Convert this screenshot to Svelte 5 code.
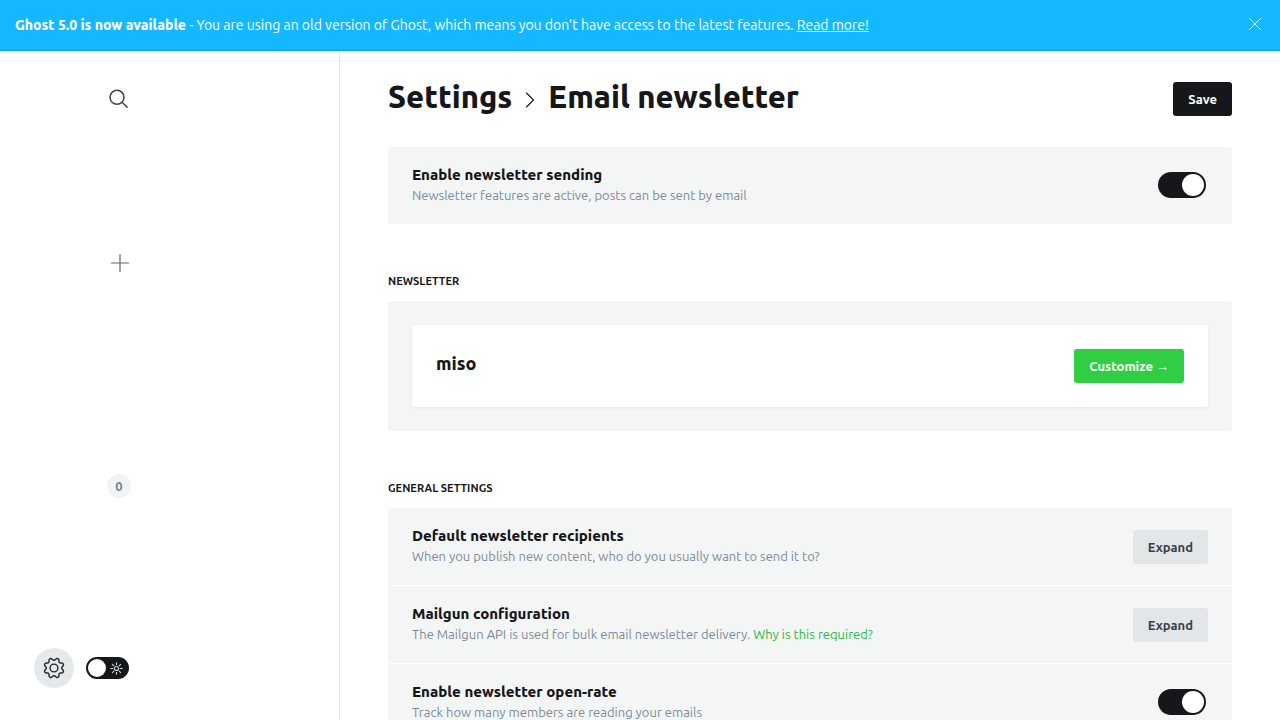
<script>
  let bannerOpen = $state(true);
  let night = $state(false);
  let sending = $state(true);
  let openRate = $state(true);

  // Eight-toothed gear outline, centred in a 22x22 box.
  const gearPath =
    'M' +
    Array.from({ length: 96 }, (_, i) => {
      const t = (i / 96) * 2 * Math.PI;
      const wave = -Math.cos(8 * t);
      const r = 8.9 + 1.2 * Math.sign(wave) * Math.pow(Math.abs(wave), 0.7);
      return `${(11 + r * Math.cos(t)).toFixed(2)} ${(11 + r * Math.sin(t)).toFixed(2)}`;
    }).join('L') +
    'Z';
</script>

<div class="app">
  {#if bannerOpen}
    <aside class="banner">
      <p><b>Ghost 5.0 is now available</b> - You are using an old version of Ghost, which means you don't have access to the latest features. <a href="#update">Read more!</a></p>
      <button class="close" aria-label="Close" onclick={() => (bannerOpen = false)}>
        <svg width="12" height="12" viewBox="0 0 12 12"><path d="M0 0l12 12M12 0L0 12" fill="none" stroke="#fff" stroke-width=".8" /></svg>
      </button>
    </aside>
  {/if}

  <div class="body">
    <nav class="sidebar">
      <button class="icon search" aria-label="Search">
        <svg width="20" height="20" viewBox="0 0 20 20" fill="none" stroke="#394047" stroke-width="1.5" stroke-linecap="round"><circle cx="8" cy="8.3" r="7" /><path d="M13.1 13.3l5 4.9" /></svg>
      </button>
      <a class="icon add" href="#new-post" aria-label="New post">
        <svg width="20" height="20" viewBox="0 0 20 20" fill="none" stroke="#5d666f" stroke-width="1.2" stroke-linecap="round"><path d="M10 1.5v17M1.5 10h17" /></svg>
      </a>
      <a class="count" href="#members">0</a>
      <div class="tools">
        <a class="gear" href="#settings" aria-label="Settings">
          <svg width="22" height="22" viewBox="0 0 22 22" fill="none" stroke="#23272c" stroke-width="1.4" stroke-linejoin="round">
            <circle cx="11" cy="11" r="3.9" />
            <path d={gearPath} />
          </svg>
        </a>
        <label class="night">
          <input type="checkbox" aria-label="Night shift" bind:checked={night} />
          <svg width="13" height="13" viewBox="0 0 14 14" fill="none" stroke="#ced4d9" stroke-width="1.2" stroke-linecap="round"><circle cx="7" cy="7" r="2.2" /><path d="M7 .8v2.2M7 11v2.2M.8 7H3M11 7h2.2M2.6 2.6l1.5 1.5M9.9 9.9l1.5 1.5M2.6 11.4l1.5-1.5M9.9 4.1l1.5-1.5" /></svg>
        </label>
      </div>
    </nav>

    <main>
      <header>
        <h1>
          <a href="#settings">Settings</a>
          <svg width="10" height="18" viewBox="0 0 10 18" fill="none" stroke="#15171a" stroke-width="1.1" stroke-linecap="round" stroke-linejoin="round"><path d="M1.5 2L8.5 9l-7 7" /></svg>
          <span>Email newsletter</span>
        </h1>
        <button class="btn dark">Save</button>
      </header>

      <section class="panel">
        <div class="row">
          <div>
            <h4>Enable newsletter sending</h4>
            <p>Newsletter features are active, posts can be sent by email</p>
          </div>
          <input class="switch" type="checkbox" aria-label="Enable newsletter sending" bind:checked={sending} />
        </div>
      </section>

      <h2>Newsletter</h2>
      <section class="panel inset">
        <div class="card">
          <h3>miso</h3>
          <button class="btn green">Customize →</button>
        </div>
      </section>

      <h2>General settings</h2>
      <section class="panel">
        <div class="row">
          <div>
            <h4>Default newsletter recipients</h4>
            <p>When you publish new content, who do you usually want to send it to?</p>
          </div>
          <button class="btn">Expand</button>
        </div>
        <div class="row">
          <div>
            <h4>Mailgun configuration</h4>
            <p>The Mailgun API is used for bulk email newsletter delivery. <a href="#mailgun">Why is this required?</a></p>
          </div>
          <button class="btn">Expand</button>
        </div>
        <div class="row">
          <div>
            <h4>Enable newsletter open-rate</h4>
            <p>Track how many members are reading your emails</p>
          </div>
          <input class="switch" type="checkbox" aria-label="Enable newsletter open-rate" bind:checked={openRate} />
        </div>
      </section>
    </main>
  </div>
</div>

<style>
  :global(body) { margin: 0; }
  .app, .app * { box-sizing: border-box; }
  .app {
    display: flex;
    flex-direction: column;
    height: 100vh;
    overflow: hidden;
    background: #fff;
    color: #15171a;
    font-family: Ubuntu, "Noto Sans", sans-serif;
    font-size: 13px;
    -webkit-font-smoothing: antialiased;
  }
  h1, h2, h3, h4, p { margin: 0; }
  button { padding: 0; border: 0; background: none; font: inherit; cursor: pointer; }
  svg { display: block; flex: none; }

  .banner {
    display: flex;
    align-items: center;
    justify-content: space-between;
    flex: none;
    min-height: 51px;
    padding: 0 15px;
    border-bottom: 1px solid #00a4eb;
    background: #14b8ff;
    color: #fff;
    font-size: 14px;
    line-height: 20px;
  }
  .banner b { font-weight: 800; }
  .banner a { color: inherit; text-decoration: underline; }
  .close { padding: 4px 4px 6px; }

  .body { display: flex; flex: 1; min-height: 0; }
  .sidebar {
    display: flex;
    flex-direction: column;
    flex: none;
    width: 340px;
    padding: 38px 32px 32px;
    border-right: 1px solid #e6e9eb;
  }
  .icon { align-self: flex-start; margin-left: 77px; }
  .add { margin: 144px 0 0 78px; }
  .count {
    display: flex;
    align-items: center;
    justify-content: center;
    width: 24px;
    height: 24px;
    margin: 201px 0 0 75px;
    border-radius: 50%;
    background: #f1f3f4;
    color: #738393;
    font-size: 13px;
    font-weight: 700;
    text-decoration: none;
  }
  .tools { display: flex; align-items: center; gap: 12px; margin: auto 0 0 2px; }
  .gear {
    display: flex;
    align-items: center;
    justify-content: center;
    width: 40px;
    height: 40px;
    border-radius: 50%;
    background: #e6e9eb;
  }
  .night {
    display: flex;
    align-items: center;
    justify-content: space-between;
    width: 43px;
    height: 22px;
    padding: 0 6px 0 2px;
    border-radius: 11px;
    background: #15171a;
    cursor: pointer;
  }
  .night input {
    appearance: none;
    width: 18px;
    height: 18px;
    margin: 0;
    border-radius: 50%;
    background: #fff;
  }
  .night:has(input:checked) { flex-direction: row-reverse; padding: 0 2px 0 6px; }

  main {
    flex: 1;
    min-width: 0;
    padding: 0 48px 48px;
    overflow-y: auto;
    scrollbar-width: none;
  }
  header {
    display: flex;
    align-items: center;
    justify-content: space-between;
    height: 96px;
  }
  h1 {
    display: flex;
    align-items: center;
    gap: 13px;
    padding-bottom: 4px;
    font-size: 31px;
    line-height: 40px;
    font-weight: 800;
  }
  h1 a { color: inherit; text-decoration: none; }
  h1 svg { margin-top: 6px; }
  h2 {
    margin: 48px 0 10px;
    font-size: 11px;
    line-height: 19px;
    font-weight: 600;
    text-transform: uppercase;
  }
  .panel { border-radius: 3px; background: #f4f6f6; }
  .inset { padding: 24px; }
  .card {
    display: flex;
    justify-content: space-between;
    padding: 24px;
    border-radius: 3px;
    background: #fff;
    box-shadow: 0 1px 4px rgba(0, 0, 0, .06);
  }
  h3 { font-size: 18px; line-height: 28px; font-weight: 800; }
  .row {
    display: flex;
    align-items: center;
    justify-content: space-between;
    min-height: 77px;
    padding: 0 24px;
  }
  .row + .row { min-height: 78px; border-top: 1px solid #fff; }
  .row > div { padding-bottom: 3px; }
  h4 { font-size: 15px; line-height: 21px; font-weight: 800; }
  .row p { color: #7c8b9a; font-size: 13px; line-height: 20px; }
  .row p a { color: #2bba3c; text-decoration: none; }
  .btn {
    height: 34px;
    padding: 0 15px;
    border-radius: 3px;
    background: #e2e6e9;
    color: #394047;
    font-size: 13px;
    font-weight: 600;
    white-space: nowrap;
  }
  .dark { background: #15171a; color: #fff; }
  .green { background: #30cf43; color: #fff; }
  .switch {
    display: flex;
    align-items: center;
    appearance: none;
    width: 48px;
    height: 26px;
    margin: 0 2px 1px;
    padding: 0 2px;
    border-radius: 13px;
    background: #ced4d9;
    cursor: pointer;
  }
  .switch::before {
    content: "";
    width: 22px;
    height: 22px;
    border-radius: 50%;
    background: #fff;
  }
  .switch:checked { justify-content: flex-end; background: #15171a; }
</style>
